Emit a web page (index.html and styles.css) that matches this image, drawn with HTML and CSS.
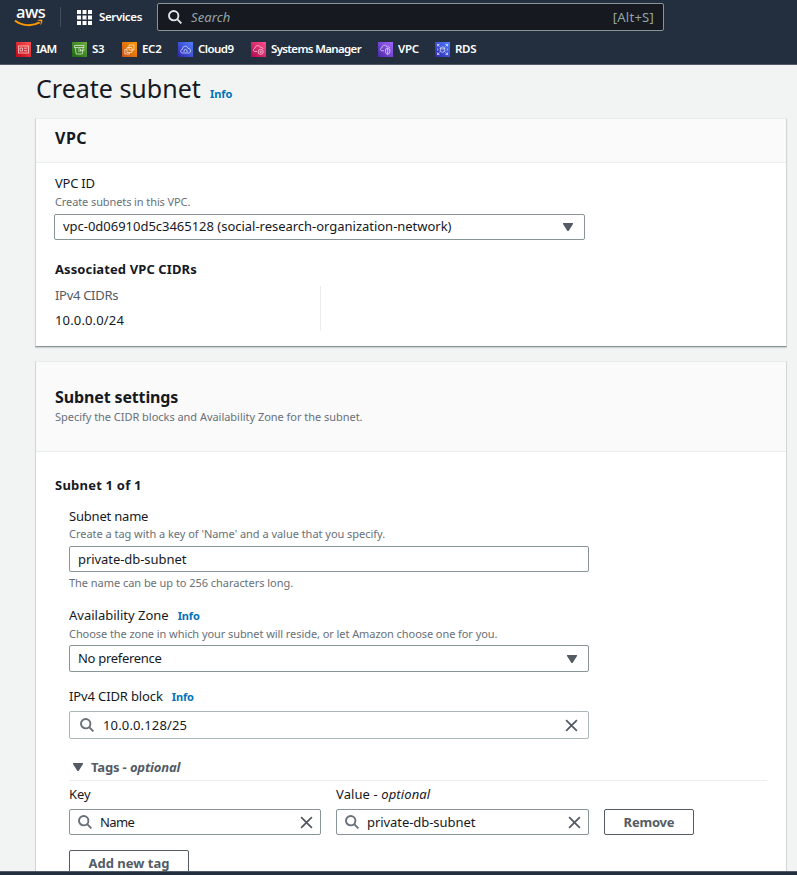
FILE: index.html
```html
<!DOCTYPE html>
<html lang="en">
<head>
<meta charset="utf-8">
<title>Create subnet</title>
<link rel="stylesheet" href="styles.css">
</head>
<body>
<svg class="defs" aria-hidden="true">
  <symbol id="search" viewBox="0 0 14 14"><circle cx="5.7" cy="5.7" r="4.7"/><path d="M9.2 9.2L13.4 13.4"/></symbol>
  <symbol id="close" viewBox="0 0 14 14"><path d="M1.2 1.2L12.8 12.8M12.8 1.2L1.2 12.8"/></symbol>
  <symbol id="caret" viewBox="0 0 10 8"><path d="M0 0H10V1L5.6 8H4.4L0 1z"/></symbol>
</svg>
<div class="app">
<header class="nav">
  <div class="nav-top">
    <div class="logo">
      <span class="logo-text">aws</span>
      <svg class="smile" viewBox="0 0 32 9"><path d="M1 1.5C8 7.2 19 7.7 26.5 3.4" fill="none" stroke="#f90" stroke-width="2"/><path d="M23.5 1.2C26 .2 28.6 .1 29.2 .8C29.8 1.7 28.8 4.6 27.2 6.4C27.4 4.6 28.1 2.9 27.6 2.3C27 1.7 25.1 1.7 23.5 1.2z" fill="#f90"/></svg>
    </div>
    <div class="nav-rule"></div>
    <svg class="grid-icon" viewBox="0 0 15 15"><path d="M0 0h4v4H0zM5.5 0h4v4h-4zM11 0h4v4h-4zM0 5.5h4v4H0zM5.5 5.5h4v4h-4zM11 5.5h4v4h-4zM0 11h4v4H0zM5.5 11h4v4h-4zM11 11h4v4h-4z"/></svg>
    <span class="services">Services</span>
    <div class="search"><svg class="icon"><use href="#search"/></svg><span class="placeholder">Search</span><span class="shortcut">[Alt+S]</span></div>
  </div>
  <nav class="favorites">
    <a class="fav iam"><svg viewBox="0 0 15 15"><rect x="2.5" y="4" width="10" height="7"/><path d="M4 6h2.5v3H4zM8 6.2h3M8 8.7h3"/></svg><span>IAM</span></a>
    <a class="fav s3"><svg viewBox="0 0 15 15"><path d="M2.5 3.5h9.5v2h-9.5zM3.2 5.5l1 6.5h6l1-6.5M6 7h2.5v2H6M8.5 9l4-1.2"/></svg><span>S3</span></a>
    <a class="fav ec2"><svg viewBox="0 0 15 15"><path d="M7 3h5v5H7zM5 5.5h5v5H5zM5 7.5H2.8V12H7.5v-1.5"/></svg><span>EC2</span></a>
    <a class="fav cloud9"><svg viewBox="0 0 15 15"><path d="M4.5 11C2 11 2 7.8 4.3 7.4C4.3 3.6 9 3.2 9.8 6.2C13.5 6.2 13.4 11 10.5 11zM6 10V8.3q1.5-1.6 3 0V10"/></svg><span>Cloud9</span></a>
    <a class="fav ssm"><svg viewBox="0 0 15 15"><path d="M6 9.5H4C1.8 9.5 2 6.5 4 6.3C4.2 3 8.5 2.8 9.5 5.4C11 5 12 6 12 7"/><circle cx="9.7" cy="9.8" r="2.5"/><circle cx="9.7" cy="9.8" r=".7"/></svg><span>Systems Manager</span></a>
    <a class="fav vpc"><svg viewBox="0 0 15 15"><path d="M6 8.8H4C1.9 8.8 2 6 4 5.8C4.2 2.5 8.3 2.4 9.2 5C10.5 4.6 11.5 5 11.7 6M7.5 7.2L9.7 6.4l2.1 .8V10q0 1.6-2.1 2.5Q7.5 11.5 7.5 10zM9.7 6.5v5.7"/></svg><span>VPC</span></a>
    <a class="fav rds"><svg viewBox="0 0 15 15"><ellipse cx="7.5" cy="6" rx="2.2" ry="1"/><path d="M5.3 6v3.5q2.2 1.6 4.4 0V6M2.5 4.5v-2h2M2.5 2.5l2 2M12.5 4.5v-2h-2M12.5 2.5l-2 2M2.5 10.5v2h2M2.5 12.5l2-2M12.5 10.5v2h-2M12.5 12.5l-2-2M2.7 6.5v2M12.3 6.5v2"/></svg><span>RDS</span></a>
  </nav>
</header>
<main>
  <div class="title-row"><h1>Create subnet</h1><a class="info title-info">Info</a></div>

  <section class="card vpc-card">
    <div class="card-head"><h2 class="t-vpc">VPC</h2></div>
    <div class="card-body">
      <div class="label t-vpcid">VPC ID</div>
      <div class="hint t-create">Create subnets in this VPC.</div>
      <div class="field select wide"><span class="value t-id">vpc-0d06910d5c3465128 (social-research-organization-network)</span><svg class="caret"><use href="#caret"/></svg></div>
      <h3 class="assoc">Associated VPC CIDRs</h3>
      <div class="cidrs"><div class="cidr-key">IPv4 CIDRs</div><div class="cidr-value">10.0.0.0/24</div></div>
    </div>
  </section>

  <section class="card subnet-card">
    <div class="card-head"><h2 class="t-settings">Subnet settings</h2><p class="hint t-specify">Specify the CIDR blocks and Availability Zone for the subnet.</p></div>
    <div class="card-body">
      <h3 class="count">Subnet 1 of 1</h3>
      <div class="form">
        <div class="label t-name">Subnet name</div>
        <div class="hint t-tag">Create a tag with a key of 'Name' and a value that you specify.</div>
        <div class="field name-field"><span class="value t-private">private-db-subnet</span></div>
        <div class="hint below t-long">The name can be up to 256 characters long.</div>
        <div class="label zone"><span class="t-zone">Availability Zone</span><a class="info">Info</a></div>
        <div class="hint t-choose">Choose the zone in which your subnet will reside, or let Amazon choose one for you.</div>
        <div class="field select zone-field"><span class="value t-nopref">No preference</span><svg class="caret"><use href="#caret"/></svg></div>
        <div class="label block"><span class="t-block">IPv4 CIDR block</span><a class="info">Info</a></div>
        <div class="field cidr-field"><svg class="icon"><use href="#search"/></svg><span class="value t-cidr">10.0.0.128/25</span><svg class="close"><use href="#close"/></svg></div>
        <div class="tags-head"><svg class="caret"><use href="#caret"/></svg><span class="t-tags">Tags - <em>optional</em></span></div>
        <div class="tag-grid">
          <div class="label t-key">Key</div>
          <div class="label t-value">Value - <em>optional</em></div>
          <div></div>
          <div class="field tag-field"><svg class="icon"><use href="#search"/></svg><span class="value t-nameval">Name</span><svg class="close"><use href="#close"/></svg></div>
          <div class="field tag-field"><svg class="icon"><use href="#search"/></svg><span class="value t-private">private-db-subnet</span><svg class="close"><use href="#close"/></svg></div>
          <button class="btn remove">Remove</button>
        </div>
        <button class="btn add">Add new tag</button>
      </div>
    </div>
  </section>
</main>
<footer class="bottom-bar"></footer>
</div>
</body>
</html>
```
FILE: styles.css
```css
* { box-sizing: border-box; }
body { margin: 0; font-family: "Noto Sans", "Open Sans", sans-serif; font-size: 13px; color: #16191f; background: #f2f3f3; overflow: hidden; }
h1, h2, h3, p { margin: 0; }
.defs { position: absolute; width: 0; height: 0; }
.app { height: 875px; display: flex; flex-direction: column; }
span, .hint, h1, h2, h3 { white-space: nowrap; }

.nav { flex: none; height: 65px; background: #232f3e; border-bottom: 1px solid #505b69; color: #fff; }
.nav-top { display: flex; align-items: center; height: 34px; padding-left: 14px; }
.logo { width: 31px; height: 34px; }
.logo-text { display: block; height: 19px; margin: 2px 0 0 2px; font-size: 16.5px; line-height: 19px; font-weight: 500; letter-spacing: -.5px; }
.smile { display: block; width: 31px; height: 9px; margin-top: -2px; }
.nav-rule { width: 1px; height: 20px; margin: 0 16px 0 15px; background: #414d5c; }
.grid-icon { width: 15px; height: 15px; fill: #fff; }
.services { margin-left: 7px; width: 58px; padding-bottom: 1px; font-size: 11.5px; font-weight: 600; letter-spacing: -.35px; }
.search { display: flex; align-items: center; width: 507px; height: 28px; border: 1px solid #879596; border-radius: 2px; background: #161920; padding: 0 9px 0 10px; color: #95a5a6; }
.icon { width: 14px; height: 14px; fill: none; stroke: #687078; stroke-width: 1.9; flex: none; }
.search .icon { stroke: #e2e5e8; }
.placeholder { margin-left: 9px; font-style: italic; letter-spacing: .1px; }
.shortcut { margin-left: auto; letter-spacing: .25px; }
.favorites { display: flex; height: 30px; align-items: center; padding-left: 16px; }
.fav { display: flex; align-items: center; font-size: 11.5px; font-weight: 600; }
.fav svg { width: 15px; height: 15px; margin-right: 5px; fill: none; stroke: #fff; stroke-width: .75; stroke-opacity: .82; }
.fav span { letter-spacing: -.3px; padding-bottom: 1px; }
.iam { width: 56px; } .iam svg { background: linear-gradient(45deg, #bd0816, #ff5252); }
.iam span { letter-spacing: -.7px; }
.s3 { width: 50px; } .s3 svg { background: linear-gradient(45deg, #1b660f, #6cae3e); }
.ec2 { width: 56px; } .ec2 svg { background: linear-gradient(45deg, #c8511b, #f90); }
.cloud9 { width: 73px; } .cloud9 svg { background: linear-gradient(45deg, #2e27ad, #527fff); }
.cloud9 span { letter-spacing: -.55px; }
.ssm { width: 127px; } .ssm svg { background: linear-gradient(45deg, #b0084d, #ff4f8b); }
.ssm span { letter-spacing: -.65px; }
.vpc { width: 57px; } .vpc svg { background: linear-gradient(45deg, #4d27a8, #a166ff); }
.rds svg { background: linear-gradient(45deg, #2e27ad, #527fff); }

main { flex: 1; min-height: 0; overflow: hidden; padding: 0 10px 0 35px; }
.title-row { height: 53px; display: flex; padding-left: 1px; }
h1 { width: 174px; font-size: 25px; font-weight: 400; line-height: 47px; }
.info { color: #0073bb; font-size: 11px; font-weight: 700; letter-spacing: -.1px; }
.title-info { line-height: 58px; }
.card { background: #fff; border: 1px solid #d0d5d6; border-top-color: #eaeded; }
.card-head { background: #fafafa; border-bottom: 1px solid #eaeded; padding-left: 19px; }
.card-body { padding-left: 18px; }
.vpc-card { height: 229px; border-bottom-color: #879596; box-shadow: 0 1px 1px rgba(0,28,36,.15); }
.vpc-card .card-head { height: 44px; }
h2 { font-size: 16px; font-weight: 700; line-height: 24px; }
h3 { font-size: 13px; font-weight: 700; line-height: 20px; }
.t-vpc { padding-top: 7px; letter-spacing: .5px; }
.label { height: 20px; line-height: 20px; }
.t-vpcid { margin-top: 10px; letter-spacing: -.25px; }
.hint { height: 17px; line-height: 17px; font-size: 11px; color: #687078; }
.field { display: flex; align-items: center; border: 1px solid #879596; border-radius: 2px; background: #fff; padding-left: 8px; }
.wide { width: 531px; height: 26px; margin-top: 4px; }
.caret { width: 10px; height: 8px; fill: #545b64; flex: none; }
.select .caret { margin-left: auto; margin-right: 11px; }
.assoc { margin-top: 19px; letter-spacing: .1px; }
.t-vpcid, .t-create, .assoc, .cidrs, .count { padding-left: 1px; }
.cidrs { width: 267px; height: 45px; margin-top: 7px; border-right: 1px solid #eaeded; }
.cidr-key { height: 18px; line-height: 18px; color: #545b64; letter-spacing: -.3px; }
.cidr-value { height: 20px; margin-top: 6px; line-height: 20px; letter-spacing: .15px; }
.t-create { letter-spacing: -.1px; }
.t-id { letter-spacing: -.02px; padding-bottom: 2px; }
.t-settings { letter-spacing: -.13px; }
.t-specify, .t-tag { letter-spacing: -.03px; }
.t-long { letter-spacing: -.04px; }
.t-choose { letter-spacing: -.07px; }
.t-name { letter-spacing: -.2px; }
.t-private { letter-spacing: -.06px; }
.t-nopref { letter-spacing: -.3px; padding-bottom: 2px; }
.t-block { letter-spacing: -.13px; }
.t-cidr { letter-spacing: .15px; }
.t-tags { letter-spacing: -.15px; }
.t-value { letter-spacing: .1px; }
.t-nameval { letter-spacing: -.6px; }

.subnet-card { margin-top: 14px; height: 560px; }
.subnet-card .card-head { height: 90px; padding-top: 23px; }
.t-specify { margin-top: -1px; }
.count { margin-top: 23px; letter-spacing: .22px; }
.form { width: 698px; margin: 11px 0 0 15px; }
.t-tag { margin-top: -1px; }
.name-field { width: 520px; height: 26px; margin-top: 4px; }
.below { margin-top: 2px; }
.zone { margin-top: 14px; }
.label .info { margin-left: 9px; }
.zone-field { width: 520px; height: 27px; margin-top: 3px; }
.block { margin-top: 14px; }
.cidr-field { width: 520px; height: 28px; margin-top: 5px; padding-left: 10px; border-color: #aab7b8; }
.cidr-field .value { margin-left: 9px; }
.close { width: 13px; height: 13px; margin-left: auto; margin-right: 10px; fill: none; stroke: #545b64; stroke-width: 1.9; flex: none; }
.tags-head { display: flex; align-items: center; height: 28px; margin-top: 14px; padding-left: 4px; border-bottom: 1px solid #eaeded; color: #545b64; font-weight: 700; }
.tags-head .caret { margin-right: 8px; }
.tag-grid { display: grid; grid-template-columns: 252px 253px 90px; column-gap: 15px; row-gap: 5px; margin-top: 3px; }
.tag-field { height: 26px; }
.tag-field .value { margin-left: 8px; padding-bottom: 1px; }
.tag-field .close { margin-right: 7px; }
.btn { height: 26px; padding: 0; border: 1px solid #545b64; border-radius: 2px; background: #fff; color: #545b64; font: 700 13px/24px "Noto Sans", sans-serif; }
.remove { letter-spacing: -.2px; line-height: 23px; }
.add { display: block; width: 120px; margin-top: 15px; line-height: 22px; }
.bottom-bar { flex: none; height: 4px; background: #232f3e; border-top: 1px solid #505b69; }
```
